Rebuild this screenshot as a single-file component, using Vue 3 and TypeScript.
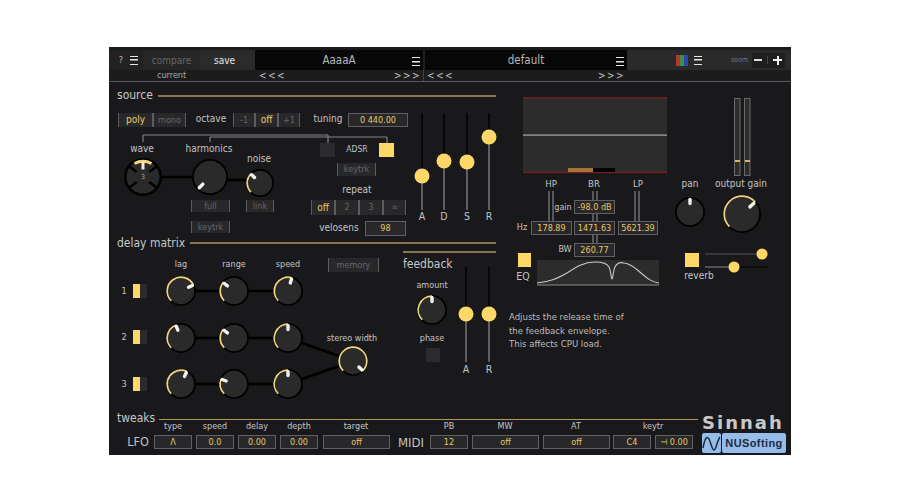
<script setup lang="ts">
const OX = 109
const OY = 82

interface Knob { x: number; y: number; r: number; angle: number; arc: boolean }
interface Label { t: string; x: number; y: number; size?: number; tone?: string }
interface Box { t: string; x: number; y: number; w: number; h: number; kind: string }
interface Slider { x: number; top: number; bottom: number; thumb: number }

const at = (x: number, y: number) => ({ left: `${x - OX}px`, top: `${y - OY}px` })
const boxStyle = (b: Box) => ({ ...at(b.x, b.y), width: `${b.w}px`, height: `${b.h}px` })
const labelStyle = (l: Label) => ({ ...at(l.x, l.y), fontSize: `${l.size ?? 10}px` })

const polar = (k: Knob, rad: number, deg: number) => {
  const a = (deg * Math.PI) / 180
  return { x: k.x + rad * Math.sin(a), y: k.y - rad * Math.cos(a) }
}
const arcPath = (k: Knob) => {
  const rad = k.r - 1.2
  const s = polar(k, rad, -135)
  const e = polar(k, rad, k.angle)
  const large = k.angle + 135 > 180 ? 1 : 0
  return `M${s.x} ${s.y}A${rad} ${rad} 0 ${large} 1 ${e.x} ${e.y}`
}
const pointer = (k: Knob) => {
  const a = polar(k, k.r * 0.56, k.angle)
  const b = polar(k, k.r * 0.84, k.angle)
  return { x1: a.x, y1: a.y, x2: b.x, y2: b.y }
}

const knobs: Knob[] = [
  { x: 210, y: 177, r: 18, angle: -135, arc: false },
  { x: 260, y: 183, r: 14, angle: -45, arc: true },
  { x: 181, y: 291, r: 15, angle: 64, arc: true },
  { x: 234, y: 291, r: 15, angle: -52, arc: true },
  { x: 288, y: 291, r: 15, angle: 16, arc: true },
  { x: 181, y: 338, r: 15, angle: -22, arc: true },
  { x: 234, y: 338, r: 15, angle: -52, arc: true },
  { x: 288, y: 338, r: 15, angle: 0, arc: true },
  { x: 181, y: 384, r: 15, angle: 25, arc: true },
  { x: 234, y: 384, r: 15, angle: -69, arc: true },
  { x: 288, y: 384, r: 15, angle: 0, arc: true },
  { x: 353, y: 361, r: 15, angle: 135, arc: true },
  { x: 432, y: 310, r: 15, angle: 0, arc: true },
  { x: 690, y: 212, r: 15, angle: 0, arc: false },
  { x: 742, y: 214, r: 19, angle: 48, arc: true },
]

const wires = [
  [160, 177, 195, 177], [226, 180, 248, 180],
  [194, 291, 222, 291], [247, 291, 276, 291],
  [194, 338, 222, 338], [247, 338, 276, 338],
  [194, 384, 222, 384], [247, 384, 276, 384],
  [288, 338, 353, 361], [288, 384, 353, 361],
]

const sliders: Slider[] = [
  { x: 422, top: 113, bottom: 210, thumb: 176 },
  { x: 444, top: 113, bottom: 210, thumb: 161 },
  { x: 467, top: 113, bottom: 210, thumb: 162 },
  { x: 489, top: 113, bottom: 210, thumb: 137 },
  { x: 466, top: 267, bottom: 362, thumb: 314 },
  { x: 489, top: 267, bottom: 362, thumb: 314 },
]

const labels: Label[] = [
  { t: 'octave', x: 211, y: 119, size: 10 },
  { t: 'tuning', x: 328, y: 119, size: 10 },
  { t: 'wave', x: 142, y: 149, size: 10 },
  { t: 'harmonics', x: 209, y: 149, size: 10 },
  { t: 'noise', x: 259, y: 159, size: 10 },
  { t: 'ADSR', x: 357, y: 149, size: 8.5 },
  { t: 'repeat', x: 357, y: 190, size: 10 },
  { t: 'velosens', x: 339, y: 228, size: 10 },
  { t: 'A', x: 422, y: 216, size: 10.5 },
  { t: 'D', x: 444, y: 216, size: 10.5 },
  { t: 'S', x: 467, y: 216, size: 10.5 },
  { t: 'R', x: 489, y: 216, size: 10.5 },
  { t: 'A', x: 466, y: 369, size: 10.5 },
  { t: 'R', x: 489, y: 369, size: 10.5 },
  { t: 'lag', x: 181, y: 264, size: 9 },
  { t: 'range', x: 234, y: 264, size: 9 },
  { t: 'speed', x: 288, y: 264, size: 9 },
  { t: 'stereo width', x: 352, y: 338, size: 9 },
  { t: 'amount', x: 432, y: 285, size: 9 },
  { t: 'phase', x: 432, y: 338, size: 9 },
  { t: '1', x: 124, y: 291, size: 9 },
  { t: '2', x: 124, y: 337, size: 9 },
  { t: '3', x: 124, y: 384, size: 9 },
  { t: 'type', x: 173, y: 426, size: 9 },
  { t: 'speed', x: 215, y: 426, size: 9 },
  { t: 'delay', x: 257, y: 426, size: 9 },
  { t: 'depth', x: 299, y: 426, size: 9 },
  { t: 'target', x: 356, y: 426, size: 9 },
  { t: 'PB', x: 449, y: 426, size: 9 },
  { t: 'MW', x: 505, y: 426, size: 9 },
  { t: 'AT', x: 576, y: 426, size: 9 },
  { t: 'keytr', x: 653, y: 426, size: 9 },
  { t: 'LFO', x: 138, y: 442, size: 12.5 },
  { t: 'MIDI', x: 411, y: 442, size: 13 },
  { t: 'HP', x: 551, y: 184, size: 9.5 },
  { t: 'BR', x: 594, y: 184, size: 9.5 },
  { t: 'LP', x: 638, y: 184, size: 9.5 },
  { t: 'pan', x: 690, y: 184, size: 10 },
  { t: 'output gain', x: 741, y: 184, size: 10 },
  { t: 'gain', x: 563, y: 207, size: 9 },
  { t: 'Hz', x: 522, y: 227, size: 9 },
  { t: 'BW', x: 565, y: 249, size: 9 },
  { t: 'EQ', x: 523, y: 276, size: 10.5 },
  { t: 'reverb', x: 699, y: 276, size: 10 },
]

const heads: Label[] = [
  { t: 'source', x: 117, y: 95, size: 12 },
  { t: 'delay matrix', x: 117, y: 243, size: 12 },
  { t: 'feedback', x: 403, y: 264, size: 12 },
  { t: 'tweaks', x: 117, y: 418, size: 12 },
]

const rules = [
  { x: 158, y: 96, w: 338 },
  { x: 190, y: 243, w: 306 },
  { x: 403, y: 252, w: 93 },
  { x: 159, y: 419, w: 539 },
]

const buttons: Box[] = [
  { t: 'poly', x: 118, y: 113, w: 35, h: 14, kind: 'seg on big' },
  { t: 'mono', x: 153, y: 113, w: 33, h: 14, kind: 'seg' },
  { t: '-1', x: 233, y: 113, w: 22, h: 14, kind: 'seg' },
  { t: 'off', x: 255, y: 113, w: 23, h: 14, kind: 'seg on big' },
  { t: '+1', x: 278, y: 113, w: 22, h: 14, kind: 'seg' },
  { t: 'off', x: 311, y: 200, w: 24, h: 15, kind: 'seg on big' },
  { t: '2', x: 335, y: 200, w: 24, h: 15, kind: 'seg' },
  { t: '3', x: 359, y: 200, w: 24, h: 15, kind: 'seg' },
  { t: '∞', x: 383, y: 200, w: 23, h: 15, kind: 'seg' },
  { t: 'keytrk', x: 337, y: 163, w: 39, h: 13, kind: 'seg' },
  { t: 'full', x: 191, y: 200, w: 39, h: 12, kind: 'seg' },
  { t: 'keytrk', x: 191, y: 221, w: 39, h: 12, kind: 'seg' },
  { t: 'link', x: 246, y: 200, w: 28, h: 12, kind: 'seg' },
  { t: 'memory', x: 328, y: 258, w: 51, h: 14, kind: 'seg' },
  { t: '0 440.00', x: 348, y: 113, w: 60, h: 14, kind: 'val' },
  { t: '98', x: 365, y: 221, w: 41, h: 15, kind: 'val' },
  { t: '-98.0 dB', x: 574, y: 200, w: 41, h: 14, kind: 'val' },
  { t: '178.89', x: 531, y: 221, w: 41, h: 14, kind: 'val' },
  { t: '1471.63', x: 574, y: 221, w: 41, h: 14, kind: 'val' },
  { t: '5621.39', x: 618, y: 221, w: 40, h: 14, kind: 'val' },
  { t: '260.77', x: 574, y: 243, w: 41, h: 14, kind: 'val' },
  { t: 'Λ', x: 154, y: 435, w: 38, h: 14, kind: 'val' },
  { t: '0.0', x: 196, y: 435, w: 38, h: 14, kind: 'val' },
  { t: '0.00', x: 238, y: 435, w: 38, h: 14, kind: 'val' },
  { t: '0.00', x: 280, y: 435, w: 38, h: 14, kind: 'val' },
  { t: 'off', x: 323, y: 435, w: 67, h: 14, kind: 'val' },
  { t: '12', x: 430, y: 435, w: 38, h: 14, kind: 'val' },
  { t: 'off', x: 472, y: 435, w: 67, h: 14, kind: 'val' },
  { t: 'off', x: 543, y: 435, w: 67, h: 14, kind: 'val' },
  { t: 'C4', x: 613, y: 435, w: 38, h: 14, kind: 'val' },
  { t: '⊣ 0.00', x: 655, y: 435, w: 38, h: 14, kind: 'val' },
]

const toggles: Box[] = [
  { t: '', x: 320, y: 143, w: 15, h: 14, kind: 'off' },
  { t: '', x: 379, y: 143, w: 15, h: 14, kind: 'lit' },
  { t: '', x: 426, y: 348, w: 14, h: 14, kind: 'off' },
  { t: '', x: 518, y: 253, w: 13, h: 14, kind: 'lit' },
  { t: '', x: 685, y: 253, w: 14, h: 14, kind: 'lit' },
  { t: '', x: 133, y: 284, w: 7, h: 14, kind: 'lit' },
  { t: '', x: 140, y: 284, w: 7, h: 14, kind: 'off' },
  { t: '', x: 133, y: 330, w: 7, h: 14, kind: 'lit' },
  { t: '', x: 140, y: 330, w: 7, h: 14, kind: 'off' },
  { t: '', x: 133, y: 377, w: 7, h: 14, kind: 'lit' },
  { t: '', x: 140, y: 377, w: 7, h: 14, kind: 'off' },
]

const links = [
  [143, 135, 143, 142], [143, 135, 328, 135], [328, 135, 328, 147],
  [210, 137, 387, 137], [210, 137, 210, 142], [387, 137, 387, 146],
  [549, 191, 549, 221], [553, 191, 553, 221],
  [593, 191, 593, 243], [597, 191, 597, 243],
  [635, 191, 635, 221], [639, 191, 639, 221],
]

const helpLines = [
  'Adjusts the release time of',
  'the feedback envelope.',
  'This affects CPU load.',
]

const waveSpokes = [52, 128, -128, -52].map((deg) => {
  const a = (deg * Math.PI) / 180
  return {
    x1: 143 + 8 * Math.sin(a), y1: 177 - 8 * Math.cos(a),
    x2: 143 + 18 * Math.sin(a), y2: 177 - 18 * Math.cos(a),
  }
})
</script>

<template>
  <div class="page">
    <div class="synth">
      <header class="top">
        <div class="top-row">
          <div class="tools">
            <span class="help">?</span>
            <i class="burger"></i>
          </div>
          <div class="action dim">compare</div>
          <div class="action bright">save</div>
          <div class="display first"><span>AaaaA</span><i class="burger"></i></div>
          <div class="display second"><span>default</span><i class="burger"></i></div>
          <div class="right-tools">
            <svg class="swatch" width="12" height="11" viewBox="0 0 12 11">
              <rect width="4" height="11" fill="#b8352f" />
              <rect x="4" width="4" height="11" fill="#3f8f45" />
              <rect x="8" width="4" height="11" fill="#2c48b0" />
            </svg>
            <i class="burger"></i>
            <span class="zoom-label">zoom</span>
            <div class="zoom-box">
              <span class="zoom-minus"></span>
              <span class="zoom-sep"></span>
              <span class="zoom-plus"></span>
            </div>
          </div>
        </div>
        <div class="nav-row">
          <div class="current">current</div>
          <div class="nav nav-first"><span>&lt;&lt;&lt;</span><span>&gt;&gt;&gt;</span></div>
          <div class="nav nav-second"><span>&lt;&lt;&lt;</span><span>&gt;&gt;&gt;</span></div>
        </div>
      </header>

      <main class="panel">
        <i v-for="(r, i) in rules" :key="'r' + i" class="rule" :class="{ thin: i === 3 }"
          :style="{ ...at(r.x, r.y), width: r.w + 'px' }"></i>

        <svg class="wiring" width="682" height="372" :viewBox="`${OX} ${OY} 682 372`">
          <line v-for="(l, i) in links" :key="'l' + i" :x1="l[0]" :y1="l[1]" :x2="l[2]" :y2="l[3]"
            stroke="#838386" stroke-width="1.2" />
          <line v-for="(w, i) in wires" :key="'w' + i" :x1="w[0]" :y1="w[1]" :x2="w[2]" :y2="w[3]"
            stroke="#000" stroke-width="2.6" />

          <!-- wave selector -->
          <circle cx="143" cy="177" r="19" fill="#000" />
          <circle cx="143" cy="177" r="16.5" fill="#2a2a2a" />
          <line v-for="(s, i) in waveSpokes" :key="'s' + i" v-bind="s" stroke="#000" stroke-width="2.6" />
          <path d="M134.5 163.5Q143 159 151.5 163.5" fill="none" stroke="#f5d878" stroke-width="3" />
          <line x1="143" y1="162" x2="143" y2="169.5" stroke="#f3ead0" stroke-width="3" />

          <g v-for="(k, i) in knobs" :key="'k' + i">
            <circle :cx="k.x" :cy="k.y" :r="k.r" fill="#000" />
            <circle :cx="k.x" :cy="k.y" :r="k.r - 1.8" fill="#2a2a2a" />
            <path v-if="k.arc" :d="arcPath(k)" fill="none" stroke="#f0d680" stroke-width="1.7" />
            <line v-bind="pointer(k)" stroke="#f2f2ee" stroke-width="3.4" stroke-linecap="round" />
          </g>

          <g v-for="(s, i) in sliders" :key="'f' + i">
            <line :x1="s.x" :y1="s.top" :x2="s.x" :y2="s.thumb" stroke="#000" stroke-width="1.5" />
            <line :x1="s.x" :y1="s.thumb" :x2="s.x" :y2="s.bottom" stroke="#77777a" stroke-width="1.5" />
            <circle :cx="s.x" :cy="s.thumb" r="7.5" fill="#fdd767" />
          </g>

          <!-- EQ screen -->
          <rect x="523" y="97" width="144" height="76" fill="#2c2c2c" />
          <rect x="523" y="97" width="144" height="1.6" fill="#6e2020" />
          <rect x="523" y="171.6" width="144" height="1.6" fill="#6e2020" />
          <rect x="523" y="134.4" width="144" height="1.4" fill="#9a9a9a" />
          <rect x="568" y="168" width="25" height="4" fill="#a87438" />
          <rect x="593" y="168" width="22" height="4" fill="#000" />

          <!-- EQ curve -->
          <rect x="537" y="260" width="122" height="25" fill="#2c2c2c" />
          <line x1="537" y1="285" x2="659" y2="285" stroke="#8a8a8a" stroke-width="1" />
          <path d="M537 283C550 282 558 278 567 273C576 267 584 262 595 262C603 262 607 263 609 267C611 271 611 279 612 279C613 279 613 271 615 267C617 263 620 262 624 263C632 264 636 269 641 273C648 279 652 282 659 283"
            fill="none" stroke="#c8c8c8" stroke-width="1.1" />

          <!-- output meters -->
          <rect x="734.5" y="98.5" width="5.5" height="77" fill="#2c2c2c" stroke="#6a6a6a" />
          <rect x="744.5" y="98.5" width="5.5" height="77" fill="#2c2c2c" stroke="#6a6a6a" />
          <rect x="735" y="160" width="5" height="2" fill="#d9b85c" />
          <rect x="745" y="160" width="5" height="2" fill="#d9b85c" />

          <!-- reverb sliders -->
          <line x1="705" y1="254" x2="768" y2="254" stroke="#55555a" stroke-width="1.2" />
          <line x1="705" y1="267" x2="734" y2="267" stroke="#77777a" stroke-width="1.2" />
          <line x1="734" y1="267" x2="768" y2="267" stroke="#000" stroke-width="1.2" />
          <circle cx="762" cy="254" r="5.5" fill="#fdd767" />
          <circle cx="734" cy="267" r="5.5" fill="#fdd767" />
        </svg>

        <span class="wave-num" :style="at(143, 177)">3</span>

        <span v-for="(l, i) in labels" :key="'t' + i" class="label" :style="labelStyle(l)">{{ l.t }}</span>
        <span v-for="(h, i) in heads" :key="'h' + i" class="head" :style="labelStyle(h)">{{ h.t }}</span>

        <div v-for="(b, i) in buttons" :key="'b' + i" class="ctl" :class="b.kind" :style="boxStyle(b)">{{ b.t }}</div>
        <i v-for="(b, i) in toggles" :key="'g' + i" class="toggle" :class="b.kind" :style="boxStyle(b)"></i>

        <p class="help-text" :style="at(509, 310)">
          <span v-for="line in helpLines" :key="line">{{ line }}</span>
        </p>

        <div class="brand" :style="at(702, 413)">
          <div class="brand-name">Sinnah</div>
          <div class="brand-row">
            <div class="brand-icon">
              <svg width="19" height="20" viewBox="0 0 19 20">
                <path d="M1 15C3 4 5 3 7 6C9 10 10 17 12 17C14 17 15 8 18 4" fill="none" stroke="#1d2a3a" stroke-width="1.5" />
              </svg>
            </div>
            <div class="brand-tag">NUSofting</div>
          </div>
        </div>
      </main>
    </div>
  </div>
</template>

<style scoped>
.page {
  width: 900px;
  height: 500px;
  background: #fff;
  padding: 47px 0 0 109px;
  box-sizing: border-box;
  overflow: hidden;
  font-family: "DejaVu Sans Condensed", "DejaVu Sans", sans-serif;
  font-stretch: condensed;
  color: #c4c4c4;
}
.synth {
  width: 682px;
  height: 408px;
  background: #19191b;
  display: flex;
  flex-direction: column;
}
.top {
  height: 35px;
  flex: none;
  border-bottom: 1px solid #55565a;
  box-sizing: border-box;
  padding-top: 3px;
  background: #1c1c1d;
}
.top-row {
  display: flex;
  height: 20px;
  background: #222223;
}
.tools {
  width: 34px;
  display: flex;
  align-items: center;
  justify-content: flex-end;
  gap: 7px;
  padding-right: 5px;
  box-sizing: border-box;
}
.help { font-size: 9px; color: #bbb; }
.burger {
  display: inline-block;
  width: 8px;
  height: 7px;
  border-top: 1.5px solid #e6e6e6;
  border-bottom: 1.5px solid #e6e6e6;
  background: linear-gradient(#e6e6e6, #e6e6e6) center / 100% 1.5px no-repeat;
  flex: none;
}
.action {
  display: flex;
  align-items: center;
  justify-content: center;
  font-size: 10px;
}
.dim { width: 57px; color: #66666a; background: #262627; }
.bright { width: 55px; background: #2b2b2c; color: #e6e6e6; padding-right: 6px; box-sizing: border-box; }
.display {
  background: #070708;
  display: flex;
  align-items: center;
  justify-content: center;
  position: relative;
  font-size: 11.5px;
  color: #b8b8b8;
}
.display .burger { position: absolute; right: 3px; top: 7px; }
.first { width: 168px; margin-right: 2px; }
.second { width: 202px; }
.second .burger { right: 3px; }
.right-tools {
  flex: 1;
  display: flex;
  align-items: center;
  background: #2a2a2b;
  padding-left: 49px;
}
.swatch { flex: none; }
.right-tools .burger { margin-left: 6px; }
.zoom-label { font-size: 7px; color: #77777a; margin-left: 29px; width: 21px; }
.zoom-box {
  width: 33px;
  height: 15px;
  background: #1e1e1f;
  display: flex;
  align-items: center;
}
.zoom-minus { width: 8px; height: 2px; background: #ddd; margin-left: 2px; }
.zoom-sep { width: 1px; height: 8px; background: #444; margin-left: 5px; }
.zoom-plus {
  width: 9px;
  height: 9px;
  margin-left: 5px;
  background:
    linear-gradient(#eee, #eee) center / 100% 2px no-repeat,
    linear-gradient(#eee, #eee) center / 2px 100% no-repeat;
}
.nav-row {
  display: flex;
  height: 11px;
  font-size: 9px;
  line-height: 11px;
}
.current { width: 146px; padding-left: 48px; box-sizing: border-box; color: #a8a8a8; }
.nav { display: flex; justify-content: space-between; color: #c0c0c0; letter-spacing: 1.5px; font-size: 10px; }
.nav-first { width: 168px; padding: 0 2px 0 4px; box-sizing: border-box; }
.nav-second { width: 204px; padding: 0 2px 0 3px; box-sizing: border-box; border-left: 1px solid #444; }
.panel {
  position: relative;
  flex: 1;
  background: #19191b;
}
.wiring { position: absolute; left: 0; top: 0; }
.rule {
  position: absolute;
  height: 2px;
  margin-top: -1px;
  background: #85764b;
}
.rule.thin { height: 1px; margin-top: 0; background: #b0985a; }
.label {
  position: absolute;
  transform: translate(-50%, -50%);
  white-space: nowrap;
  color: #c4c4c4;
  line-height: 1;
}
.head {
  position: absolute;
  transform: translateY(-50%);
  white-space: nowrap;
  color: #c8c8c8;
  line-height: 1;
}
.wave-num {
  position: absolute;
  transform: translate(-50%, -50%);
  font-size: 7px;
  color: #aaa;
  line-height: 1;
}
.ctl {
  position: absolute;
  display: flex;
  align-items: center;
  justify-content: center;
  box-sizing: border-box;
  font-size: 9px;
  line-height: 1;
  background: #28282a;
}
.seg {
  border-left: 1px solid #5c5c5e;
  border-right: 1px solid #5c5c5e;
  color: #66666a;
}
.seg.on { color: #efc964; }
.seg.big { font-size: 10px; }
.val {
  border: 1px solid #606062;
  color: #e6c768;
}
.toggle { position: absolute; display: block; }
.toggle.lit { background: #fdd767; }
.toggle.off { background: #2b2b2d; }
.help-text {
  position: absolute;
  margin: 0;
  display: flex;
  flex-direction: column;
  font-size: 9.5px;
  line-height: 13.6px;
  color: #bdbdbd;
  white-space: nowrap;
}
.brand { position: absolute; width: 86px; }
.brand-name {
  font-family: "DejaVu Sans", sans-serif;
  font-stretch: normal;
  font-weight: 700;
  font-size: 18px;
  line-height: 19px;
  letter-spacing: 2px;
  color: #c9c9c9;
}
.brand-row { display: flex; gap: 1px; margin-top: 1px; }
.brand-icon {
  width: 19px;
  height: 20px;
  background: #96bcea;
  border-radius: 2px;
}
.brand-icon svg { display: block; }
.brand-tag {
  width: 64px;
  height: 20px;
  background: #96bcea;
  border-radius: 2px;
  color: #1d2a3a;
  font-family: "Liberation Sans", sans-serif;
  font-stretch: normal;
  font-weight: 700;
  font-size: 11px;
  letter-spacing: 0.4px;
  display: flex;
  align-items: center;
  justify-content: center;
}
</style>
